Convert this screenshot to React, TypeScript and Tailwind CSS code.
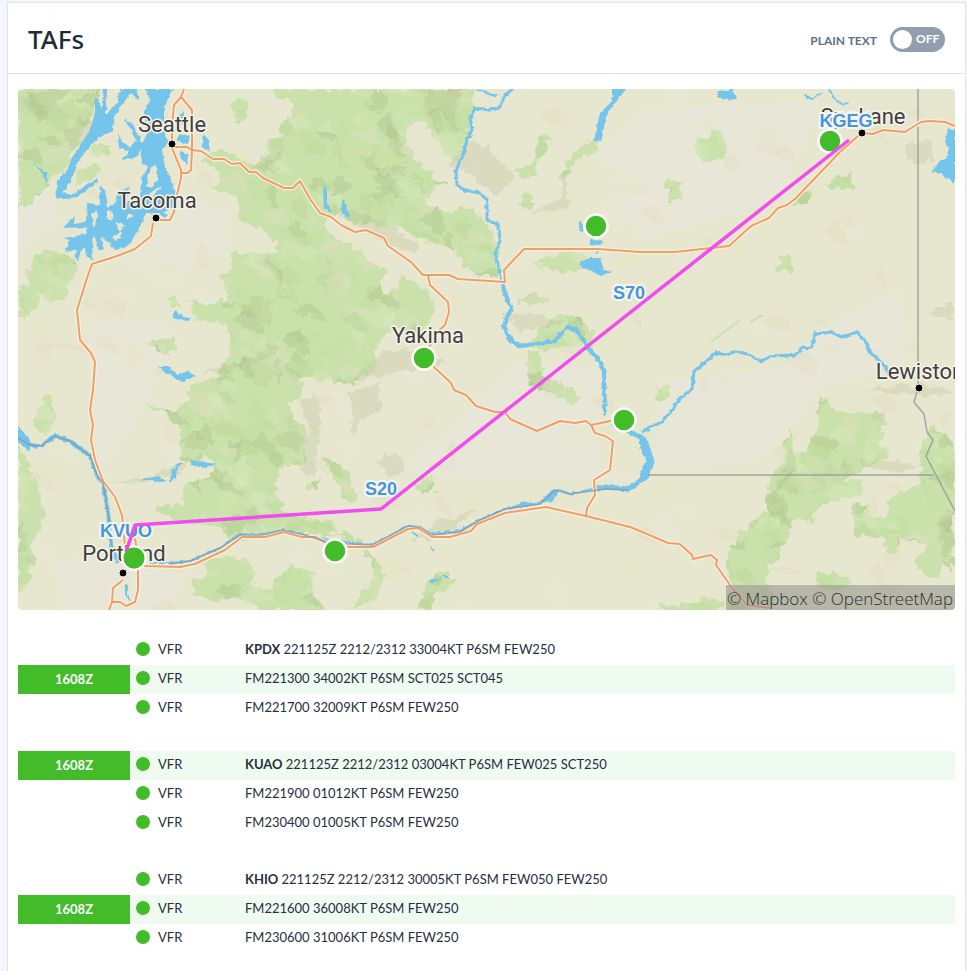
import React, { useState } from "react";

const FOREST = [
  "M18 89H100L94 112L84 130L74 150L69 165L50 180L44 192L30 204L18 210Z",
  "M78 170L98 162L101 172L86 181L76 184Z",
  "M88 145L112 146L108 154L95 156Z",
  "M26 274L34 258L52 250L74 258L78 270L70 280L66 298L52 303L34 292Z",
  "M18 290L30 282L40 302L34 312L18 320Z",
  "M272 89L275 97L294 103L292 118L280 125L282 136L268 140L266 156L252 164L238 158L224 151L206 155L200 160L214 166L220 173L214 190L232 193L240 204L236 218L254 226L274 238L276 252L232 253L231 270L222 274L228 300L200 304L188 300L196 320L226 324L231 356L221 362L219 376L200 383L190 386L188 404L172 412L142 403L168 416L180 430L180 458L190 465L212 456L214 474L184 484L183 504L154 508L176 521L215 526L236 540L300 530L326 536L344 534L330 520L300 518L282 508L275 495L278 468L306 463L308 432L296 420L288 404L304 395L300 378L340 383L352 384L375 371L376 344L392 330L414 334L430 325L434 305L430 292L412 280L400 274L398 288L384 294L378 284L386 270L370 262L354 248L330 234L322 224L342 212L350 222L372 224L400 228L430 242L456 250L462 266L480 275L498 278L498 242L486 222L470 208L448 212L424 204L430 192L446 184L420 166L410 150L404 136L412 122L426 124L440 146L456 162L466 138L470 118L474 89Z",
  "M190 584L206 573L204 562L222 556L250 560L256 574L248 586L266 588L282 574L290 564L304 572L316 574L312 592L324 610H262L232 596L214 602L196 592Z",
  "M18 442L26 456L44 510L40 530L30 545L34 560L26 588L18 590Z",
  "M34 424L45 392L52 396L56 410L52 430L44 436Z",
  "M150 340L174 338L178 350L168 354L155 352Z",
  "M166 300L176 298L182 305L175 308Z",
  "M234 100L248 97L246 120L236 122L230 108Z",
  "M526 345L546 322L560 313L580 318L592 330L594 346L572 344L546 350Z",
  "M528 354L540 348L542 376L558 382L576 392L582 398L574 406L556 394L530 386Z",
  "M515 168L534 164L540 136L549 134L548 150L536 162L538 176L520 176Z",
  "M566 162L584 144L596 140L598 148L574 162L570 176L564 174Z",
  "M517 205L524 194L528 196L537 205L528 210Z",
  "M533 264L556 254L572 252L590 258L582 270L564 272Z",
  "M515 303L530 293L552 300L548 305L526 304Z",
  "M695 134L706 140L716 128L722 136L730 150L724 158L704 164L696 148Z",
  "M665 181L684 180L680 190L683 200L669 200Z",
  "M825 187L838 176L852 172L850 182L857 188L844 190Z",
  "M777 270L780 258L790 254L794 275Z",
  "M790 206L798 194L812 190L808 204Z",
  "M657 390L668 386L667 398L657 401Z",
  "M822 393L834 410L856 414L886 412L884 430L876 444L888 448L886 458L868 468L840 482L866 482L858 496L832 500L816 510L812 526L800 518L792 524L786 542L780 548L780 558L768 564L767 582L776 606L730 610L727 558L738 534L752 522L770 512L764 502L770 480L784 460L784 440L790 430L798 458L812 444L818 420Z",
  "M852 504L868 506L870 518L886 518L888 500L900 492L920 486L924 440L932 426L945 436L955 440V570L944 564L938 578L920 572L914 560L930 548L916 540L900 540L898 552L886 552L884 536L852 535Z",
  "M816 574L834 572L852 580L848 590L818 588Z",
  "M334 462L350 474L356 500L344 500L338 484L320 456Z",
  "M306 486L322 476L318 488L308 492Z",
  "M417 488L432 474L435 490L420 494Z",
  "M324 532L345 530L368 546L378 568L386 576L374 600L350 610L364 590L374 576L370 560L350 542Z",
  "M418 610L428 580L444 570L456 580L440 592L428 610Z",
  "M664 606L690 604L706 598L724 600V610H660Z",
];

const SHADE = [
  "M62 130L94 118L90 140L70 150Z",
  "M18 96L55 89L70 89L40 120Z",
  "M202 372L240 362L262 352L270 340L282 350L250 366L214 374Z",
  "M180 440L196 430L206 440L204 450L186 448Z",
  "M242 306L258 294L270 302L272 318L270 330L256 318L240 316Z",
  "M275 436L288 430L308 442L298 450L280 446Z",
  "M284 276L278 290L276 292L280 270Z",
  "M424 90L458 90L456 130L440 110L426 116Z",
  "M260 166L284 148L282 156L266 170Z",
  "M385 120L400 135L404 160L392 150Z",
  "M374 170L408 164L406 174L380 178Z",
  "M470 140L488 148L514 176L498 198L462 168L448 166Z",
  "M324 205L368 213L420 246L414 254L380 240Z",
  "M105 485L140 482L184 472L186 462L150 476Z",
  "M300 400L318 392L322 420L318 440L314 480L300 470L310 430Z",
  "M350 392L380 382L380 412L360 420L352 440Z",
  "M386 350L420 350L450 362L400 372L350 384L360 372Z",
  "M410 540L440 520L480 510L460 520L450 535Z",
  "M864 390L900 384L940 386L955 394L920 396Z",
  "M856 460L904 462L920 466L900 472L862 466Z",
  "M768 500L786 470L790 440L798 470Z",
  "M938 520L955 505V540L944 560Z",
  "M376 460L398 452L404 470L392 478Z",
  "M560 200L562 170L568 170L566 210L530 212Z",
  "M500 314L540 312L560 324L520 330Z",
  "M906 145L930 140L934 162L906 162Z",
  "M928 312L950 302L953 320L940 318Z",
];

const PALE = [
  "M90 320L160 320L180 340L130 430L100 470L88 400Z",
  "M520 360L600 370L600 480L480 480L400 470L460 420Z",
  "M640 110L820 100L780 200L640 240L600 150Z",
  "M660 380L780 370L820 330L900 290L910 360L820 390L760 460L660 470Z",
  "M18 120L60 220L18 250Z",
  "M190 200L230 210L226 250L180 270L150 250Z",
  "M60 560L140 555L180 580L170 610H60Z",
];

const LAKES = [
  "M120 89H138V100L131 93L123 103L114 117L113 131L98 137L81 157L71 180L63 193L72 195L97 178L99 181L77 197L63 199L55 198L57 182L67 170L72 157L90 130L95 113L95 98L99 99L101 110L104 89H107L106 115L117 103Z",
  "M145 89H173L167 100L164 113L164 128L168 143L162 150L165 167L173 183L176 196L171 208L164 213L146 213L142 222L138 231L127 247L115 250L108 242L101 236L103 250L99 250L94 234L92 250L93 260L86 256L85 247L80 254L78 262L75 256L77 249L65 252L70 240L65 238L86 234L87 227L63 228L75 215L74 224L86 222L87 203L100 205L100 187L105 190L108 207L116 202L118 193L129 187L126 203L140 196L142 177L147 167L142 162L140 150L138 156L122 160L129 151L119 148L118 135L124 143L131 148L136 140L124 118L133 124L142 143L147 134L144 112L150 100Z",
  "M32 163L43 169L47 174L46 184L43 173Z",
  "M179 115L184 112L184 123L178 125Z",
  "M178 134L190 136L188 144L178 142Z",
  "M203 134L208 138L210 152L202 147Z",
  "M180 151L188 155L187 164L181 160Z",
  "M158 210L168 215L164 218Z",
  "M172 315L176 309L180 315L191 318L188 321L175 319Z",
  "M157 366L166 366L178 374L188 371L195 376L182 382L172 376Z",
  "M140 482L145 477L160 477L166 481L160 482L145 480Z",
  "M170 482L171 472L178 463L184 463L177 468L176 478Z",
  "M191 460L204 462L216 464L206 468L191 465Z",
  "M323 186L327 188L327 203L333 213L324 209Z",
  "M342 198L346 206L350 216L347 218L341 210Z",
  "M474 89L488 91L498 96L494 97Z",
  "M612 89H626L616 102L607 113L601 142L594 141L600 113L612 101Z",
  "M579 220L584 227L582 233L579 229Z",
  "M590 240L604 241L598 246L590 245Z",
  "M580 262L590 258L600 258L604 270L612 272L600 276L592 271L582 268Z",
  "M716 92L733 89L736 99L728 100L718 97Z",
  "M948 129L955 129V184L950 178L946 180L942 173L932 172L936 164L946 158L949 148L945 142Z",
  "M538 503L550 492L559 488L553 501Z",
  "M514 507L524 501L536 504Z",
  "M640 438L648 442L653 462L644 480L636 484L646 460L640 448Z",
  "M18 426L30 440L30 451L18 442Z",
  "M429 545L435 550L434 552Z",
  "M430 580L443 578L431 584Z",
];

const ISLANDS = [
  "M151 167L156 165L158 178L152 188L146 185Z",
  "M150 193L161 186L158 192L150 198Z",
  "M107 210L113 212L111 222L107 216Z",
  "M116 222L126 226L119 232Z",
  "M128 213L135 216L126 219Z",
  "M112 236L122 232L121 238L114 240Z",
  "M92 214L97 210L97 222L93 228Z",
];

const RIVERS = [
  { d: "M18 436L30 445L41 446L55 436L70 441L90 456L97 475L103 483L106 500L109 520L111 545L118 563", w: 4 },
  { d: "M150 563L170 563L190 561L220 548L240 534L262 535L283 530L305 535L330 540L372 545L408 526L420 527L432 534L460 531L480 520L505 509L540 503L560 490L570 494L592 489", w: 2 },
  { d: "M592 489L605 487L628 489L645 478L652 462L645 440L633 433L612 424", w: 5 },
  { d: "M641 432L650 428L661 422L673 410L676 402L692 389L694 372L716 353L727 355L736 351L747 354L761 361L772 356L795 355L802 348L812 347L815 334L830 332L842 337L857 332L868 345L870 352L884 365L889 375", w: 3 },
  { d: "M513 89L505 95L500 107L490 110L475 108L470 118L472 130L467 140L463 155L456 170L457 185L465 190L480 193L487 200L487 220L498 224L500 240L495 255L501 277", w: 3 },
  { d: "M501 277L504 290L511 308L504 325L510 340L520 346L555 341L567 327L577 330L588 348L600 362L604 370L605 415", w: 4 },
  { d: "M804 95L812 99L822 93M829 89L833 97L842 104L848 103M596 254L598 250M126 583L126 594L130 601M443 576L448 576M412 532L418 536", w: 2 },
];

const ROADS = [
  "M184 89L181 97L174 105L172 125L172 148L181 170L181 178L177 195L174 212L170 220L156 220",
  "M181 97L192 110L192 150L191 170L188 173L181 173",
  "M153 223L151 236L135 249L117 256L92 264L88 275L77 310L80 340L91 353L95 362L93 390L90 410L93 425L91 440L95 460L103 481L115 497L122 515L124 535L126 560",
  "M172 147L187 147L192 150L201 151L213 159L224 159L232 164L240 163L249 172L256 172L263 178L284 188L293 188L300 181L310 199L320 213L331 217L341 225L355 232L366 230L384 238L388 246L411 262L423 275L449 275L458 279L505 282L504 270L524 249L598 249L640 252L675 252L729 246L751 226L769 218L778 208L787 205L795 199L840 152L858 136",
  "M862 133L873 134L883 130L905 132L921 122L930 121L945 122L955 126",
  "M428 276L430 285L448 302L449 312L445 325L438 331L424 357L435 368L451 383L454 390L466 395L476 406L495 412L505 412L510 419L537 431L560 421L575 423L586 421L591 425L620 419",
  "M591 425L595 433L605 436L613 441L610 470L594 480L595 495L587 508L586 516",
  "M134 563L145 566L180 567L195 564L225 550L242 537L265 537L284 532L302 537L315 537L330 545L350 547L373 547L408 529L418 528L432 537L450 537L471 531L477 524L505 513L546 507L586 516L630 527L640 531L668 543L680 544L692 555L693 559L711 555L717 560L716 565L732 588L747 605L770 608",
  "M123 580L113 588L112 602L109 610M112 602L120 602L126 606L135 602L138 590L138 560L134 530",
];

const STATE_LINES =
  "M918 89V388L914 402L924 414L927 432L933 440L926 456L955 511M648 475H934";

const RIVER_LINES =
  "M111 545L109 520L106 500L103 483L97 475L90 456L70 441L55 436L41 446L30 445L18 438M170 564L190 561L220 548L240 535L262 535L283 530L305 535L330 543L372 545L408 526L420 527L432 535L460 532L480 520L505 509L540 504L555 490L570 494L605 489L628 490";

const CITIES = [
  { name: "Seattle", x: 172, y: 132, cx: 172, cy: 144 },
  { name: "Tacoma", x: 157, y: 208, cx: 156, cy: 218 },
  { name: "Yakima", x: 428, y: 343, cx: 424, cy: 357 },
  { name: "Spokane", x: 863, y: 124, cx: 862, cy: 133 },
  { name: "Lewiston", x: 920, y: 379, cx: 919, cy: 388 },
  { name: "Portland", x: 124, y: 561, cx: 123, cy: 573 },
];

const WAYPOINTS = [
  { name: "KVUO", x: 126, y: 537 },
  { name: "S20", x: 381, y: 495 },
  { name: "S70", x: 629, y: 299 },
  { name: "KGEG", x: 846, y: 127 },
];

const STATIONS = [
  [830, 141],
  [596, 226],
  [424, 358],
  [624, 420],
  [335, 551],
  [134, 558],
];

// Small angular facets that give the slopes their relief.
function buildFacets(count: number, start: number, tones: string[]) {
  let seed = start;
  const rand = () => {
    seed = (seed * 16807) % 2147483647;
    return seed / 2147483647;
  };
  return Array.from({ length: count }, (_, i) => {
    const x = 10 + rand() * 937;
    const y = 84 + rand() * 526;
    const w = 8 + rand() * 26;
    const h = 6 + rand() * 18;
    const lean = rand() * 14 - 7;
    const d = `M${x.toFixed()} ${y.toFixed()}l${(w * 0.6).toFixed()} ${(-h * 0.5).toFixed()}l${(w * 0.4).toFixed()} ${(h * 0.6).toFixed()}l${lean.toFixed()} ${(h * 0.7).toFixed()}l${(-w * 0.5).toFixed()} ${(-h * 0.2).toFixed()}z`;
    return { d, fill: tones[i % tones.length] };
  });
}

const FOREST_FACETS = buildFacets(1500, 90417, [
  "#bdd59c",
  "#bfdf9f",
  "#d5eaba",
  "#dcdfbb",
  "#c3dfa4",
  "#b2ca92",
  "#cfe6b4",
]);
const PLAIN_FACETS = buildFacets(260, 55121, ["#e5e5c4", "#ebe8da", "#e0dec0", "#e6e5c8"]);

function RouteMap() {
  return (
    <svg
      viewBox="18 89 937 521"
      className="block w-full rounded-sm"
      role="img"
      aria-label="Route map from KVUO to KGEG with TAF stations"
    >
      <defs>
        <clipPath id="forest">
          <path d={FOREST.join("")} />
        </clipPath>
        <filter id="rough" x="0" y="0" width="100%" height="100%">
          <feTurbulence type="fractalNoise" baseFrequency="0.12" numOctaves="3" seed="4" />
          <feDisplacementMap in="SourceGraphic" scale="12" xChannelSelector="R" yChannelSelector="G" />
        </filter>
        <filter id="shore" x="-5%" y="-5%" width="110%" height="110%">
          <feTurbulence type="fractalNoise" baseFrequency="0.2" numOctaves="2" seed="8" />
          <feDisplacementMap in="SourceGraphic" scale="4" xChannelSelector="R" yChannelSelector="G" />
        </filter>
      </defs>
      <rect x="18" y="89" width="937" height="521" fill="#e7e6cf" />
      <path d={PALE.join("")} fill="#e9e6d8" opacity="0.8" />
      {PLAIN_FACETS.map((f, i) => (
        <path key={i} d={f.d} fill={f.fill} opacity="0.4" />
      ))}
      <g filter="url(#rough)">
        <rect x="0" y="70" width="975" height="560" fill="none" />
        <path d={FOREST.join("")} fill="#cae1ac" />
        <g clipPath="url(#forest)">
          {FOREST_FACETS.map((f, i) => (
            <path key={i} d={f.d} fill={f.fill} opacity="0.5" />
          ))}
        </g>
        <path d={SHADE.join("")} fill="#a3a878" opacity="0.2" />
      </g>
      <g filter="url(#shore)">
        <path d={LAKES.join("")} fill="#75c4eb" />
        <path d={ISLANDS.join("")} fill="#e7e6cf" />
        <g fill="none" stroke="#75c4eb" strokeLinejoin="round">
          {RIVERS.map((r) => (
            <path key={r.d} d={r.d} strokeWidth={r.w} />
          ))}
        </g>
      </g>
      <path d={STATE_LINES} fill="none" stroke="#94949c" strokeWidth="1.5" opacity="0.8" />
      <g fill="none" strokeLinejoin="round">
        <path d={ROADS.join("")} stroke="#f8efe2" strokeWidth="4.5" />
        <path d={ROADS.join("")} stroke="#ee9f62" strokeWidth="2" />
      </g>
      <path d={RIVER_LINES} fill="none" stroke="#8498ab" strokeWidth="1.5" opacity="0.8" />
      <path d="M711 342L740 320M750 322L763 315" stroke="#c3e0a4" strokeWidth="1.5" />
      <g
        className="font-['Roboto',sans-serif] text-[22px]"
        textAnchor="middle"
        fill="#404040"
        stroke="#f5f3e8"
        strokeWidth="3"
        strokeLinejoin="round"
        paintOrder="stroke"
      >
        {CITIES.map((c) => (
          <text key={c.name} x={c.x} y={c.y}>
            {c.name}
          </text>
        ))}
      </g>
      {CITIES.map((c) => (
        <circle key={c.name} cx={c.cx} cy={c.cy} r="4" fill="#000" stroke="#f5f3e8" strokeWidth="1" />
      ))}
      <g
        className="font-['Liberation_Sans',Arial,sans-serif] text-[18px] font-bold"
        textAnchor="middle"
        fill="#4a94d8"
        stroke="#f4f6f4"
        strokeWidth="4"
        strokeLinejoin="round"
        paintOrder="stroke"
      >
        {WAYPOINTS.map((w) => (
          <text key={w.name} x={w.x} y={w.y}>
            {w.name}
          </text>
        ))}
      </g>
      {STATIONS.map(([x, y]) => (
        <circle key={x} cx={x} cy={y} r="11.5" fill="#42bc28" stroke="#fff" strokeWidth="2.5" />
      ))}
      <path
        d="M126 552L135 525L381 509L849 140"
        fill="none"
        stroke="#f24bee"
        strokeWidth="3.5"
        strokeLinejoin="round"
      />
      <circle cx="134" cy="558" r="10.5" fill="#42bc28" />
      <rect x="726" y="585" width="229" height="25" fill="#969690" opacity="0.6" />
      <text
        x="953"
        y="605"
        textAnchor="end"
        fill="#303030"
        className="font-['Open_Sans',sans-serif] text-[17px] font-light"
      >
        © Mapbox © OpenStreetMap
      </text>
    </svg>
  );
}

type Line = { text: string; station?: string; current?: boolean };

const TAFS: Line[][] = [
  [
    { station: "KPDX", text: "221125Z 2212/2312 33004KT P6SM FEW250" },
    { text: "FM221300 34002KT P6SM SCT025 SCT045", current: true },
    { text: "FM221700 32009KT P6SM FEW250" },
  ],
  [
    { station: "KUAO", text: "221125Z 2212/2312 03004KT P6SM FEW025 SCT250", current: true },
    { text: "FM221900 01012KT P6SM FEW250" },
    { text: "FM230400 01005KT P6SM FEW250" },
  ],
  [
    { station: "KHIO", text: "221125Z 2212/2312 30005KT P6SM FEW050 FEW250" },
    { text: "FM221600 36008KT P6SM FEW250", current: true },
    { text: "FM230600 31006KT P6SM FEW250" },
  ],
];

function ForecastRow({ line }: { line: Line }) {
  return (
    <tr className={line.current ? "h-[29px] bg-[#effaf1]" : "h-[29px]"}>
      <td
        className={
          line.current
            ? "bg-[#42bc28] p-0 pb-0.5 text-center font-bold text-white"
            : "p-0"
        }
      >
        {line.current ? "1608Z" : null}
      </td>
      <td className="p-0 pb-1 pl-1.5">
        <span className="flex items-center gap-2">
          <span className="size-3.5 rounded-full bg-[#42bc28]" />
          VFR
        </span>
      </td>
      <td className="p-0 pb-1">
        {line.station ? <b>{line.station} </b> : null}
        {line.text}
      </td>
    </tr>
  );
}

export default function App() {
  const [plain, setPlain] = useState(false);
  return (
    <div className="min-h-screen bg-[#f3f7fb] pt-0.5 pr-px pl-[7px] font-['Lato',sans-serif] text-[#252f3d]">
      <main className="min-h-[969px] border border-b-0 border-[#dde5ec] bg-white">
        <header className="flex h-[71px] items-center justify-between border-b border-[#dde5ec] pt-0.5 pr-5 pl-5">
          <h1 className="font-['Noto_Sans',sans-serif] text-[26px] font-medium text-[#1f2b38]">TAFs</h1>
          <label className="flex cursor-pointer items-center gap-[13px] text-[12px] font-bold text-[#5f7086]">
            <span className="pt-1">PLAIN TEXT</span>
            <input
              type="checkbox"
              className="sr-only"
              checked={plain}
              onChange={(e) => setPlain(e.target.checked)}
            />
            <span className="flex h-[25px] w-[55px] items-center gap-1 rounded-full bg-[#929eae] pl-[3px] text-white">
              <span className="size-[19px] rounded-full bg-white" />
              {plain ? "ON" : "OFF"}
            </span>
          </label>
        </header>
        <div className="px-2.5 pt-[15px]">
          <RouteMap />
          <table className="mt-[26px] w-full table-fixed border-collapse text-[13px] leading-5">
            <colgroup>
              <col className="w-28" />
              <col className="w-[115px]" />
              <col />
            </colgroup>
            {TAFS.map((group, i) => (
              <tbody key={i}>
                {group.map((line) => (
                  <ForecastRow key={line.text} line={line} />
                ))}
                <tr className="h-7" aria-hidden="true">
                  <td colSpan={3} />
                </tr>
              </tbody>
            ))}
          </table>
        </div>
      </main>
    </div>
  );
}
